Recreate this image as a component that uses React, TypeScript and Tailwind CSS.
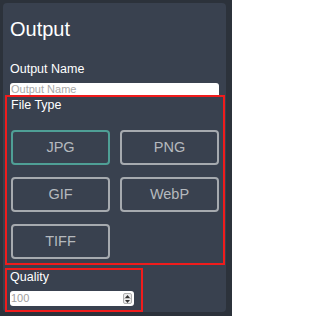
import React from "react";

const types = ["JPG", "PNG", "GIF", "WebP", "TIFF"];

export default function App() {
  return (
    <div
      className="w-[232px] h-[316px] bg-[#2c323b] pt-[3px] pl-[3px] pr-[6px] pb-[4px]"
      style={{ fontFamily: '"Liberation Sans", Arial, sans-serif' }}
    >
      <div className="h-full rounded-[4px] bg-[#39414f] pl-[2px] pr-[1px] flex flex-col">
        <div className="pl-[5px] pt-[14px] text-[20px] leading-[24px] text-white">Output</div>
        <div className="pl-[5px] mt-[21px] text-[12.5px] leading-[14px] text-white">Output Name</div>
        <div className="ml-[5px] mt-[7px] w-[209px] h-[12px] bg-white rounded-t-[3px] overflow-hidden pl-[1px] text-[11px] leading-[13px] text-[#a9a9a9]">
          Output Name
        </div>
        <div className="border-2 border-[#f01c1c] w-[220px] pt-0 px-[4px] pb-[4px]">
          <div className="text-[12.5px] leading-[16px] text-white">File Type</div>
          <div className="mt-[17px] grid grid-cols-2 gap-x-[10px] gap-y-[12px]">
            {types.map((t, i) => (
              <div
                key={t}
                className={
                  i === 0
                    ? "h-[35px] rounded-[4px] border-2 border-[#4f9f96] flex items-center justify-center text-[14.5px] text-[#b5b9be]"
                    : "h-[35px] rounded-[4px] border-2 border-[#a6aaaf] flex items-center justify-center text-[14.5px] text-[#b5b9be]"
                }
              >
                {t}
              </div>
            ))}
          </div>
        </div>
        <div className="mt-[3px] border-2 border-[#f01c1c] w-[138px] pb-[4px]">
          <div className="pl-[3px] text-[12.5px] leading-[14px] text-white">Quality</div>
          <div className="ml-[3px] mt-[7px] w-[124px] h-[15px] bg-white rounded-[3px] flex items-center pl-[1px] pr-[2px]">
            <span className="flex-1 text-[11px] leading-[13px] text-[#a0a0a0]">100</span>
            <div className="w-[9px] h-[11px] border border-[#b0b0b0] bg-[#ececec] rounded-[2px] flex flex-col">
              <div className="flex-1 flex items-center justify-center border-b border-[#c4c4c4]">
                <svg width="5" height="3" viewBox="0 0 5 3">
                  <path d="M0 3 L2.5 0 L5 3 Z" fill="#333" />
                </svg>
              </div>
              <div className="flex-1 flex items-center justify-center">
                <svg width="5" height="3" viewBox="0 0 5 3">
                  <path d="M0 0 L2.5 3 L5 0 Z" fill="#333" />
                </svg>
              </div>
            </div>
          </div>
        </div>
      </div>
    </div>
  );
}
